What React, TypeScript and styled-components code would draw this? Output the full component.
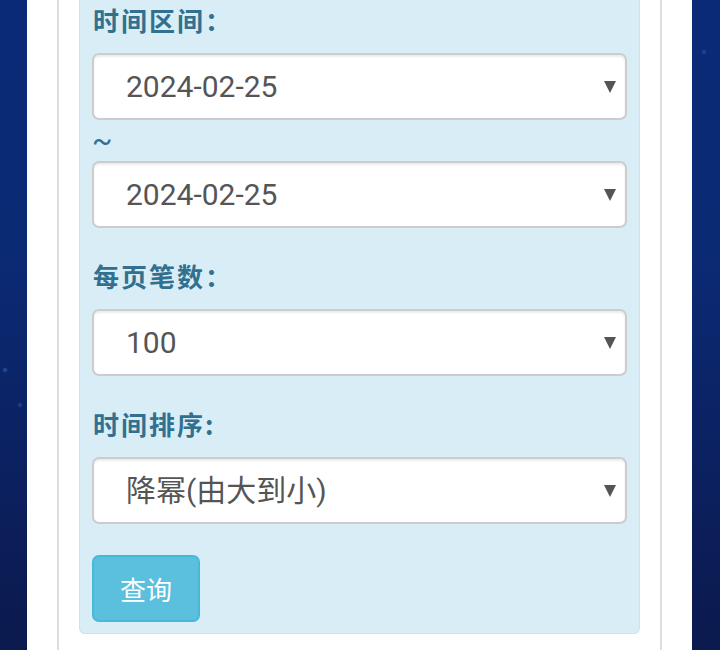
import React from "react";
import styled, { createGlobalStyle } from "styled-components";

const GlobalStyle = createGlobalStyle`
  html, body {
    margin: 0;
    padding: 0;
    height: 100%;
  }
  body {
    background: radial-gradient(circle at 5px 370px, rgba(80, 140, 255, 0.5) 0, rgba(80, 140, 255, 0) 3px),
      radial-gradient(circle at 20px 405px, rgba(80, 140, 255, 0.35) 0, rgba(80, 140, 255, 0) 3px),
      radial-gradient(circle at 704px 52px, rgba(80, 140, 255, 0.35) 0, rgba(80, 140, 255, 0) 3px),
      linear-gradient(180deg, #0a2a78 0%, #0b2a74 40%, #0b205e 75%, #0b1a4e 100%);
    font-family: "Noto Sans CJK SC", "Noto Sans", sans-serif;
  }
  #root {
    min-height: 650px;
  }
`;

const Page = styled.div`
  margin: 0 28px 0 27px;
  min-height: 650px;
  background: #fff;
  display: flex;
`;

const Column = styled.div`
  flex: 1;
  margin: 0 30px;
  border-left: 2px solid #ddd;
  border-right: 2px solid #ddd;
  padding: 0 20px;
`;

const Panel = styled.div`
  background: #d9edf7;
  border: 1px solid #bce8f1;
  border-top: none;
  border-radius: 0 0 6px 6px;
  padding: 4px 12px 11px;
`;

const FormGroup = styled.div<{ $last?: boolean }>`
  margin-bottom: ${({ $last }) => ($last ? "0" : "32px")};
`;

const Label = styled.label`
  display: block;
  color: #31708f;
  font-family: "Noto Sans CJK SC", sans-serif;
  font-weight: 700;
  font-size: 26px;
  letter-spacing: 2px;
  line-height: 32px;
  margin-bottom: 17px;
  padding-left: 1px;
`;

const Tilde = styled.div`
  color: #31708f;
  font-family: "Roboto", sans-serif;
  font-size: 30px;
  line-height: 41px;
  height: 41px;
`;

const SelectWrap = styled.div`
  position: relative;

  &::after {
    content: "";
    position: absolute;
    right: 11px;
    top: 50%;
    margin-top: -6px;
    border-left: 6px solid transparent;
    border-right: 6px solid transparent;
    border-top: 12px solid #555;
    pointer-events: none;
  }
`;

const Select = styled.select`
  display: block;
  width: 100%;
  height: 67px;
  box-sizing: border-box;
  appearance: none;
  -webkit-appearance: none;
  background: #fff;
  border: 2px solid #ccc;
  border-radius: 7px;
  box-shadow: inset 0 2px 2px rgba(0, 0, 0, 0.075);
  padding: 0 40px 0 32px;
  color: #555;
  font-family: "Roboto", "Noto Sans CJK SC", sans-serif;
  font-size: 30px;
  outline: none;
`;

const Button = styled.button`
  display: block;
  margin-top: 31px;
  width: 108px;
  height: 67px;
  background: #5bc0de;
  border: 2px solid #46b8da;
  border-radius: 7px;
  color: #fff;
  font-family: "Noto Sans CJK SC", sans-serif;
  font-size: 26px;
  padding: 0;
`;

type Field = {
  label: string;
  value: string;
  options: string[];
};

const fields: Field[] = [
  { label: "每页笔数：", value: "100", options: ["20", "50", "100"] },
  { label: "时间排序:", value: "降幂(由大到小)", options: ["降幂(由大到小)", "升幂(由小到大)"] },
];

function DropDown({ value, options }: { value: string; options: string[] }) {
  return (
    <SelectWrap>
      <Select defaultValue={value}>
        {options.map((o) => (
          <option key={o} value={o}>
            {o}
          </option>
        ))}
      </Select>
    </SelectWrap>
  );
}

export default function App() {
  const dates = ["2024-02-25", "2024-02-24", "2024-02-23"];
  return (
    <>
      <GlobalStyle />
      <Page>
        <Column>
          <Panel>
            <FormGroup>
              <Label>时间区间：</Label>
              <DropDown value="2024-02-25" options={dates} />
              <Tilde>~</Tilde>
              <DropDown value="2024-02-25" options={dates} />
            </FormGroup>
            {fields.map((f, i) => (
              <FormGroup key={f.label} $last={i === fields.length - 1}>
                <Label>{f.label}</Label>
                <DropDown value={f.value} options={f.options} />
              </FormGroup>
            ))}
            <Button>查询</Button>
          </Panel>
        </Column>
      </Page>
    </>
  );
}
